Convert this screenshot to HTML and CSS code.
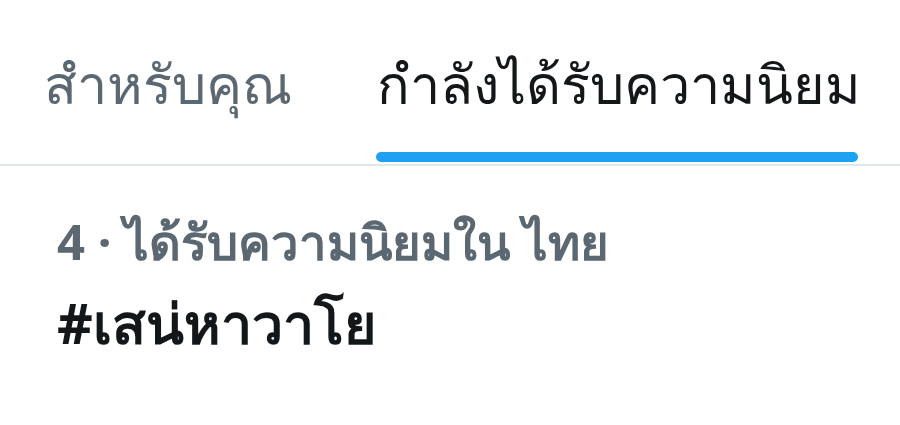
FILE: index.html
```html
<!DOCTYPE html>
<html lang="th">
<head>
    <meta charset="UTF-8">
    <meta name="viewport" content="width=device-width, initial-scale=1.0">
    <title>กำลังได้รับความนิยม</title>
    <link rel="stylesheet" href="styles.css">
</head>
<body>

    <!-- Tabs -->
    <nav class="tabs">
        <div class="tab">สำหรับคุณ</div>
        <div class="tab active">กำลังได้รับความนิยม</div>
    </nav>

    <!-- Trend item -->
    <div class="trend">
        <div class="trend-meta">4 · ได้รับความนิยมใน ไทย</div>
        <div class="trend-name">#เสน่หาวาโย</div>
    </div>

</body>
</html>
```

FILE: styles.css
```css
body {
    margin: 0;
    background-color: #fff;
    font-family: "Noto Sans", "DejaVu Sans", sans-serif;
    color: #14171a;
}

.tabs {
    display: flex;
    gap: 85px;
    height: 164px;
    padding-left: 44px;
    border-bottom: 2px solid #e1e8ed;
}

.tab {
    font-size: 54px;
    line-height: 60px;
    color: #5b6771;
    padding-top: 53px;
    position: relative;
}

.tab.active {
    color: #14171a;
}

.tab.active::after {
    content: "";
    position: absolute;
    left: -1px;
    right: 3px;
    bottom: 2px;
    height: 10px;
    border-radius: 5px;
    background-color: #1da1f2;
}

.trend {
    padding: 47px 0 0 57px;
}

.trend-meta {
    font-size: 49px;
    line-height: 56px;
    font-weight: bold;
    color: #5b6771;
}

.trend-name {
    font-size: 55.5px;
    line-height: 60px;
    font-weight: bold;
    margin-top: 24px;
}
```
